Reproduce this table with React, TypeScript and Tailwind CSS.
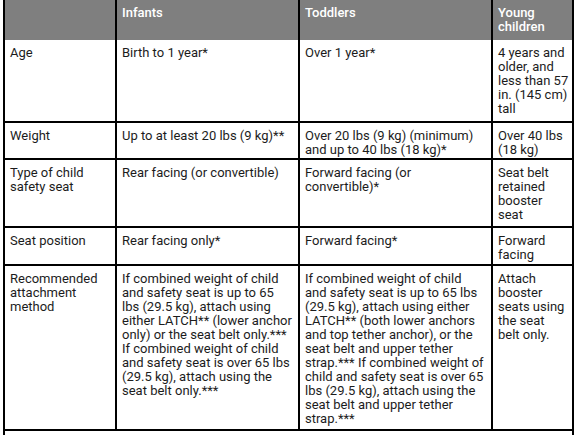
type Row = { h: string; cells: string[][] };

const rows: Row[] = [
  {
    h: "h-[81px]",
    cells: [
      ["Age"],
      ["Birth to 1 year*"],
      ["Over 1 year*"],
      ["4 years and", "older, and", "less than 57", "in. (145 cm)", "tall"],
    ],
  },
  {
    h: "h-[35px]",
    cells: [
      ["Weight"],
      ["Up to at least 20 lbs (9 kg)**"],
      ["Over 20 lbs (9 kg) (minimum)", "and up to 40 lbs (18 kg)*"],
      ["Over 40 lbs", "(18 kg)"],
    ],
  },
  {
    h: "h-[66px]",
    cells: [
      ["Type of child", "safety seat"],
      ["Rear facing (or convertible)"],
      ["Forward facing (or", "convertible)*"],
      ["Seat belt", "retained", "booster", "seat"],
    ],
  },
  {
    h: "h-[36px]",
    cells: [
      ["Seat position"],
      ["Rear facing only*"],
      ["Forward facing*"],
      ["Forward", "facing"],
    ],
  },
  {
    h: "h-[163px]",
    cells: [
      ["Recommended", "attachment", "method"],
      [
        "If combined weight of child",
        "and safety seat is up to 65",
        "lbs (29.5 kg), attach using",
        "either LATCH** (lower anchor",
        "only) or the seat belt only.***",
        "If combined weight of child",
        "and safety seat is over 65 lbs",
        "(29.5 kg), attach using the",
        "seat belt only.***",
      ],
      [
        "If combined weight of child",
        "and safety seat is up to 65 lbs",
        "(29.5 kg), attach using either",
        "LATCH** (both lower anchors",
        "and top tether anchor), or the",
        "seat belt and upper tether",
        "strap.*** If combined weight of",
        "child and safety seat is over 65",
        "lbs (29.5 kg), attach using the",
        "seat belt and upper tether",
        "strap.***",
      ],
      ["Attach", "booster", "seats using", "the seat", "belt only."],
    ],
  },
];

const widths = ["w-[112px]", "w-[183px]", "w-[193px]", "w-[79px]"];

function Lines({ lines }: { lines: string[] }) {
  return (
    <>
      {lines.map((l, i) => (
        <div key={i} className="whitespace-nowrap">
          {l}
        </div>
      ))}
    </>
  );
}

export default function App() {
  return (
    <div
      className="w-[575px] h-[435px] bg-white overflow-hidden text-[13px] leading-[14px] text-[#1c1c1c]"
      style={{ fontFamily: "Roboto, 'Liberation Sans', sans-serif" }}
    >
      <div className="ml-[3px] w-[571px] border-x-2 border-black">
        <div className="flex h-[40px] bg-[#7f7f7f] text-white font-medium">
          {[[""], ["Infants"], ["Toddlers"], ["Young", "children"]].map((c, i) => (
            <div
              key={i}
              className={`${widths[i]} shrink-0 pl-[5px] pt-[6px] ${i < 3 ? "border-r-2 border-black" : ""}`}
            >
              <Lines lines={c} />
            </div>
          ))}
        </div>
        {rows.map((r, ri) => (
          <div key={ri} className={`flex ${r.h} box-content border-b-2 border-black`}>
            {r.cells.map((c, i) => (
              <div
                key={i}
                className={`${widths[i]} shrink-0 pl-[5px] pt-[6px] ${i < 3 ? "border-r-2 border-black" : ""}`}
              >
                <Lines lines={c} />
              </div>
            ))}
          </div>
        ))}
        <div className="h-[10px]" />
      </div>
    </div>
  );
}
